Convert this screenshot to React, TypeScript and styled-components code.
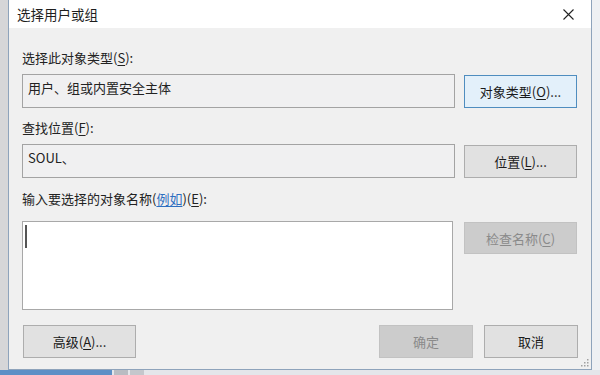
import React from 'react'
import styled, { createGlobalStyle, css } from 'styled-components'

const GlobalStyle = createGlobalStyle`
  html, body {
    margin: 0;
    padding: 0;
    background: #dcdcdc;
  }
  * { box-sizing: border-box; }
`

const FONT = `"Microsoft YaHei", "Noto Sans CJK SC", "Noto Sans", sans-serif`

const Screen = styled.div`
  width: 600px;
  height: 375px;
  display: grid;
  grid-template-columns: 8px 584px 8px;
  grid-template-rows: 370px 5px;
  overflow: hidden;
  font-family: ${FONT};
  color: #1e1e1e;
`

const LeftGutter = styled.div`
  background: #d6d6d8;
`

const RightGutter = styled.div`
  background: #eef0f3;
`

const Taskbar = styled.div`
  grid-column: 1 / 4;
  display: flex;
  background: #e4e6ea;
`

const TaskPiece = styled.div<{ $w: number; $c: string }>`
  width: ${p => p.$w}px;
  background: ${p => p.$c};
  margin-right: 2px;
`

const Dialog = styled.div`
  position: relative;
  display: flex;
  flex-direction: column;
  background: #f0f0f0;
  border: 1px solid #8ea3bb;
  border-top: none;
`

const TitleBar = styled.div`
  height: 28px;
  display: flex;
  align-items: center;
  justify-content: space-between;
  background: #ffffff;
  padding: 0 8px 0 8px;
  font-size: 13.5px;
`

const CloseBox = styled.div`
  width: 30px;
  height: 28px;
  display: flex;
  align-items: center;
  justify-content: center;
`

const Body = styled.div`
  flex: 1;
  display: flex;
  flex-direction: column;
  padding: 22px 13px 0 13px;
`

const Label = styled.div<{ $top?: number; $gap: number }>`
  height: 16px;
  line-height: 16px;
  font-size: 13px;
  margin-top: ${p => p.$top ?? 0}px;
  margin-bottom: ${p => p.$gap}px;
  color: #222;
`

const Key = styled.span`
  text-decoration: underline;
  text-underline-offset: 2px;
`

const Link = styled.span`
  color: #2f6fc0;
  text-decoration: underline;
  text-underline-offset: 2px;
`

const Row = styled.div`
  display: grid;
  grid-template-columns: 433px 113px;
  column-gap: 9px;
  align-items: start;
`

const Field = styled.div`
  height: 34px;
  border: 1px solid #a3a3a3;
  background: #f0f0f1;
  padding: 5px 5px;
  font-size: 13px;
  line-height: 16px;
  color: #222;
`

const TextArea = styled.div`
  position: relative;
  height: 89px;
  width: 431px;
  border: 1px solid #a8a8a8;
  background: #ffffff;
`

const Caret = styled.div`
  position: absolute;
  left: 2px;
  top: 3px;
  width: 1.5px;
  height: 23px;
  background: #555;
`

const Button = styled.div<{ $variant?: 'default' | 'focus' | 'disabled'; $w?: number }>`
  height: 33px;
  width: ${p => (p.$w ? `${p.$w}px` : 'auto')};
  margin-top: 1px;
  display: flex;
  align-items: center;
  justify-content: center;
  font-size: 13px;
  background: #e1e1e1;
  border: 1px solid #adadad;
  color: #1a1a1a;
  ${p => p.$variant === 'focus' && css`
    background: #e3f0fa;
    border: 1px solid #4f8dbf;
  `}
  ${p => p.$variant === 'disabled' && css`
    background: #cccccc;
    border: 1px solid #c2c2c2;
    color: #8a8a8a;
  `}
`

const Footer = styled.div`
  display: flex;
  align-items: center;
  margin-top: 14px;
  padding-left: 1px;
`

const Spacer = styled.div`
  flex: 1;
`

const Grip = styled.svg`
  position: absolute;
  right: 2px;
  bottom: 2px;
`

function CloseIcon() {
  return (
    <svg width="11" height="11" viewBox="0 0 11 11">
      <path d="M0.5 0.5 L10.5 10.5 M10.5 0.5 L0.5 10.5" stroke="#222" strokeWidth="1.1" />
    </svg>
  )
}

export default function App() {
  return (
    <>
      <GlobalStyle />
      <Screen>
        <LeftGutter />
        <Dialog>
          <TitleBar>
            <span>选择用户或组</span>
            <CloseBox><CloseIcon /></CloseBox>
          </TitleBar>
          <Body>
            <Label $gap={8}>选择此对象类型(<Key>S</Key>):</Label>
            <Row>
              <Field>用户、组或内置安全主体</Field>
              <Button $variant="focus">对象类型(<Key>O</Key>)...</Button>
            </Row>
            <Label $top={12} $gap={8}>查找位置(<Key>F</Key>):</Label>
            <Row>
              <Field>SOUL、</Field>
              <Button>位置(<Key>L</Key>)...</Button>
            </Row>
            <Label $top={13} $gap={14}>输入要选择的对象名称(<Link>例如</Link>)(<Key>E</Key>):</Label>
            <Row>
              <TextArea><Caret /></TextArea>
              <Button $variant="disabled" style={{ height: 32 }}>检查名称(<Key>C</Key>)</Button>
            </Row>
            <Footer>
              <Button $w={113}>高级(<Key>A</Key>)...</Button>
              <Spacer />
              <Button $variant="disabled" $w={94}>确定</Button>
              <Button $w={94} style={{ marginLeft: 11 }}>取消</Button>
            </Footer>
          </Body>
          <Grip width="8" height="8" viewBox="0 0 8 8">
            <g fill="#a0a0a0">
              <rect x="6" y="0" width="1.5" height="1.5" />
              <rect x="3" y="3" width="1.5" height="1.5" />
              <rect x="6" y="3" width="1.5" height="1.5" />
              <rect x="0" y="6" width="1.5" height="1.5" />
              <rect x="3" y="6" width="1.5" height="1.5" />
              <rect x="6" y="6" width="1.5" height="1.5" />
            </g>
          </Grip>
        </Dialog>
        <RightGutter />
        <Taskbar>
          <TaskPiece $w={112} $c="#5d8fc6" />
          <TaskPiece $w={14} $c="#b9bcc2" />
          <TaskPiece $w={14} $c="#c4c7cc" />
        </Taskbar>
      </Screen>
    </>
  )
}
